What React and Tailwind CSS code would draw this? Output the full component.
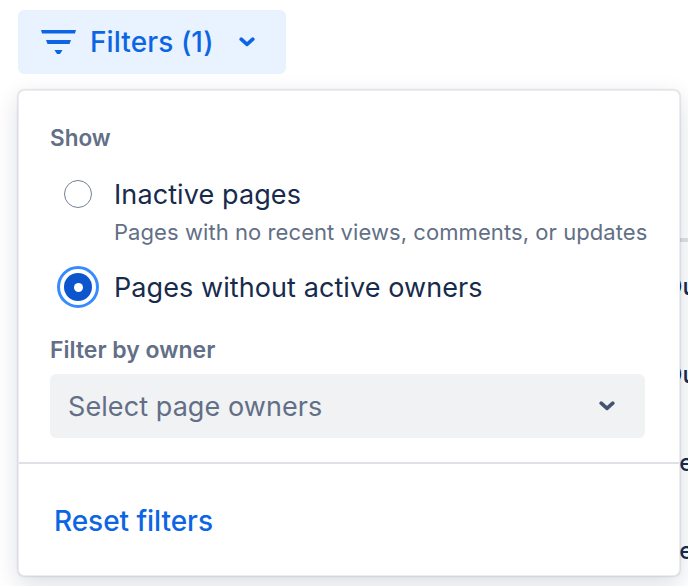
import React from "react";

function Chevron({ className }) {
  return (
    <svg viewBox="0 0 16 10" className={className} fill="none">
      <path d="M2.2 2.2 8 7.4 13.8 2.2" stroke="currentColor" strokeWidth="3.6" strokeLinecap="round" strokeLinejoin="round" />
    </svg>
  );
}

function FilterIcon() {
  return (
    <svg viewBox="0 0 35 24" className="w-[35px] h-[24px]" fill="#0c66e4">
      <path d="M0 0H35L34 3.6H1Z" />
      <path d="M5 10H30L28.5 14H6.5Z" />
      <path d="M13.5 20H21.5L19 24H16Z" />
    </svg>
  );
}

export default function App() {
  return (
    <div className="relative w-[688px] h-[586px] overflow-hidden bg-white font-['Inter',sans-serif]">
      <div className="pl-[18px] pt-[10px]">
        <button className="flex items-center w-[268px] h-[64px] rounded-[6px] bg-[#e9f2ff] pl-[23px] text-[#0c66e4]">
          <FilterIcon />
          <span className="ml-[14px] text-[28px] font-medium leading-none tracking-[0.1px]">Filters (1)</span>
          <Chevron className="ml-[25px] w-[16px] h-[10px]" />
        </button>
      </div>

      <div className="pt-[164px] text-[#172b4d] text-[24px] font-medium">
        <div className="ml-[100px] h-[4px] bg-[#dfe1e6]" />
        <div className="pl-[664px] pt-[30px] flex flex-col gap-[58px] leading-[30px] whitespace-nowrap">
          <span>Ou</span>
          <span>Ou</span>
          <span>Pe</span>
          <span>Pe</span>
        </div>
      </div>

      <div className="absolute left-[18px] top-[90px] w-[662px] h-[486px] flex flex-col rounded-[6px] bg-white border border-[#ebecef] shadow-[0_8px_24px_rgba(9,30,66,0.15),0_0_2px_rgba(9,30,66,0.3)]">
        <div className="flex-1 pl-[31px] pr-[34px] pt-[34px]">
          <div className="text-[22.5px] leading-[26px] font-semibold text-[#626f86]">Show</div>
          <div className="mt-[28px] flex items-start">
            <span className="shrink-0 ml-[14px] mt-[1px] w-[28px] h-[28px] rounded-full border border-[#758195] bg-white" />
            <div className="ml-[22px]">
              <div className="text-[27px] leading-[32px] tracking-[0.1px] text-[#172b4d]">Inactive pages</div>
              <div className="mt-[8px] text-[22px] leading-[26px] tracking-[0.07px] whitespace-nowrap text-[#626f86]">Pages with no recent views, comments, or updates</div>
            </div>
          </div>
          <div className="mt-[21px] flex items-center">
            <span className="shrink-0 ml-[7px] flex items-center justify-center w-[42px] h-[42px] rounded-full border-[3px] border-[#388bff] bg-white">
              <span className="flex items-center justify-center w-[28px] h-[28px] rounded-full bg-[#0c55cc]">
                <span className="w-[9px] h-[9px] rounded-full bg-white" />
              </span>
            </span>
            <span className="ml-[15px] mt-[2px] text-[27px] leading-[32px] tracking-[0.08px] text-[#172b4d]">Pages without active owners</span>
          </div>
          <div className="mt-[29px] text-[23px] leading-[26px] font-semibold text-[#626f86]">Filter by owner</div>
          <div className="mt-[11px] flex items-center justify-between h-[64px] rounded-[6px] bg-[#f1f2f4] pl-[18px] pr-[30px]">
            <span className="mt-[2px] text-[27px] tracking-[0.08px] text-[#626f86]">Select page owners</span>
            <Chevron className="w-[16px] h-[10px] text-[#44546f]" />
          </div>
        </div>
        <div className="h-[113px] border-t-2 border-[#dfe1e6] pl-[35px] pt-[40px]">
          <span className="text-[28px] leading-[34px] font-medium tracking-[-0.05px] text-[#0c66e4]">Reset filters</span>
        </div>
      </div>
    </div>
  );
}
